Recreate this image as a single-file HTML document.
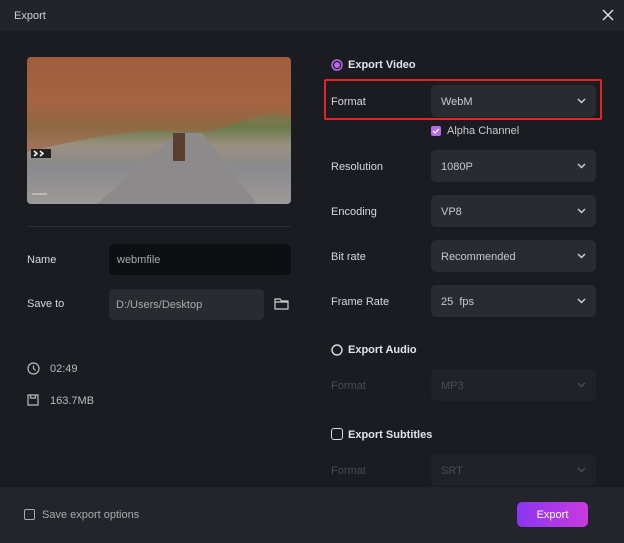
<!DOCTYPE html><html><head><style>
*{margin:0;padding:0;box-sizing:border-box}
body{width:624px;height:543px;background:#1b1c22;font-family:"Liberation Sans",sans-serif;font-size:11px;color:#d8d8dc;position:relative;overflow:hidden}
.a{position:absolute}
.sel{position:absolute;left:431px;width:165px;height:32px;background:#2a2b31;border-radius:5px;color:#c8c8cc;padding:11px 0 0 10px}
.sel.d{background:#212228;color:#4a4b52}
.sel svg{position:absolute;right:10px;top:13px}
.lbl{position:absolute;left:331px}
.lbl.d{color:#4a4b52}
.h{font-weight:bold;color:#e4e4e8}
</style></head><body>
<div class="a" style="left:0;top:0;width:624px;height:31px;background:#23242b"></div>
<div class="a" style="left:14px;top:10px;color:#d0d0d4">Export</div>
<svg class="a" style="left:602px;top:9px" width="12" height="12"><path d="M1 1L11 11M11 1L1 11" stroke="#ddd" stroke-width="1.5"/></svg>
<div class="a" style="left:27px;top:57px;width:264px;height:147px;border-radius:4px;overflow:hidden;background:linear-gradient(180deg,#9a5a3c 0%,#a86a48 30%,#6b7a4a 48%,#9a9080 60%,#8a8a8c 75%,#9c9a98 100%)">
<svg width="264" height="147" style="position:absolute;left:0;top:0"><path d="M70 147 L150 76 L175 76 L230 147Z" fill="#8c8a8a"/><path d="M0 0H264V60C230 45 200 80 160 75 120 70 60 80 0 95Z" fill="#a45f3e" opacity=".6"/><path d="M5 137L20 137" stroke="#ddd"/><rect x="146" y="76" width="12" height="28" fill="#5a3f30"/><path d="M4 92h20v9H4z" fill="#222"/><path d="M7 94l3 2.5-3 2.5M13 94l3 2.5-3 2.5" stroke="#fff" stroke-width="1.5" fill="none"/></svg></div>
<div class="a" style="left:27px;top:226px;width:264px;height:1px;background:#2e2f36"></div>
<div class="a" style="left:27px;top:254px">Name</div>
<div class="a" style="left:109px;top:244px;width:182px;height:31px;background:#0e0f12;border-radius:5px;color:#aaa;padding:10px 0 0 8px">webmfile</div>
<div class="a" style="left:27px;top:298px">Save to</div>
<div class="a" style="left:109px;top:289px;width:155px;height:31px;background:#2a2b31;border-radius:5px;color:#aaa;padding:10px 0 0 7px">D:/Users/Desktop</div>
<svg class="a" style="left:274px;top:297px" width="15" height="13"><path d="M1 2h5l1.5 2H14v8H1z M1 5h13" fill="none" stroke="#ccc" stroke-width="1.2"/></svg>
<svg class="a" style="left:27px;top:362px" width="13" height="13"><circle cx="6.5" cy="6.5" r="5.5" fill="none" stroke="#bbb" stroke-width="1.2"/><path d="M6.5 3.5v3l2 2" fill="none" stroke="#bbb" stroke-width="1.2"/></svg>
<div class="a" style="left:50px;top:363px;color:#bbb">02:49</div>
<svg class="a" style="left:27px;top:394px" width="12" height="12"><path d="M1 1h10v10H1z M3.5 1v3h5V1" fill="none" stroke="#bbb" stroke-width="1.2"/></svg>
<div class="a" style="left:50px;top:395px;color:#bbb">163.7MB</div>
<svg class="a" style="left:331px;top:59px" width="12" height="12"><circle cx="6" cy="6" r="5" fill="none" stroke="#b86ae8" stroke-width="1.5"/><circle cx="6" cy="6" r="3" fill="#b86ae8"/></svg>
<div class="a h" style="left:348px;top:59px">Export Video</div>
<div class="a" style="left:324px;top:79px;width:278px;height:41px;border:2px solid #e0242a;border-radius:2px"></div>
<div class="lbl" style="top:96px">Format</div>
<div class="sel" style="top:85px">WebM<svg width="9" height="6"><path d="M1 1l3.5 3.5L8 1" fill="none" stroke="#ccc" stroke-width="1.5"/></svg></div>
<div class="a" style="left:431px;top:126px;width:10px;height:10px;background:#b86ae8;border-radius:2px"></div>
<svg class="a" style="left:432px;top:127px" width="8" height="8"><path d="M1 4l2 2 4-4" fill="none" stroke="#fff" stroke-width="1.3"/></svg>
<div class="a" style="left:447px;top:125px;color:#ccc">Alpha Channel</div>
<div class="lbl" style="top:161px">Resolution</div>
<div class="sel" style="top:150px">1080P<svg width="9" height="6"><path d="M1 1l3.5 3.5L8 1" fill="none" stroke="#ccc" stroke-width="1.5"/></svg></div>
<div class="lbl" style="top:206px">Encoding</div>
<div class="sel" style="top:195px">VP8<svg width="9" height="6"><path d="M1 1l3.5 3.5L8 1" fill="none" stroke="#ccc" stroke-width="1.5"/></svg></div>
<div class="lbl" style="top:251px">Bit rate</div>
<div class="sel" style="top:240px">Recommended<svg width="9" height="6"><path d="M1 1l3.5 3.5L8 1" fill="none" stroke="#ccc" stroke-width="1.5"/></svg></div>
<div class="lbl" style="top:296px">Frame Rate</div>
<div class="sel" style="top:285px">25&nbsp; fps<svg width="9" height="6"><path d="M1 1l3.5 3.5L8 1" fill="none" stroke="#ccc" stroke-width="1.5"/></svg></div>
<svg class="a" style="left:331px;top:344px" width="12" height="12"><circle cx="6" cy="6" r="5" fill="none" stroke="#ddd" stroke-width="1.4"/></svg>
<div class="a h" style="left:348px;top:344px">Export Audio</div>
<div class="lbl d" style="top:380px">Format</div>
<div class="sel d" style="top:369px">MP3<svg width="9" height="6"><path d="M1 1l3.5 3.5L8 1" fill="none" stroke="#4a4b52" stroke-width="1.5"/></svg></div>
<div class="a" style="left:331px;top:428px;width:12px;height:12px;border:1.4px solid #ddd;border-radius:3px"></div>
<div class="a h" style="left:348px;top:429px">Export Subtitles</div>
<div class="lbl d" style="top:465px">Format</div>
<div class="sel d" style="top:454px">SRT<svg width="9" height="6"><path d="M1 1l3.5 3.5L8 1" fill="none" stroke="#4a4b52" stroke-width="1.5"/></svg></div>
<div class="a" style="left:0;top:487px;width:624px;height:56px;background:#24252c"></div>
<div class="a" style="left:24px;top:509px;width:11px;height:11px;border:1.2px solid #aaa;border-radius:2px"></div>
<div class="a" style="left:42px;top:509px;color:#aaa">Save export options</div>
<div class="a" style="left:517px;top:502px;width:71px;height:25px;border-radius:5px;background:linear-gradient(90deg,#8a36f0,#c93ae0);color:#fff;text-align:center;line-height:26px">Export</div>
</body></html>
